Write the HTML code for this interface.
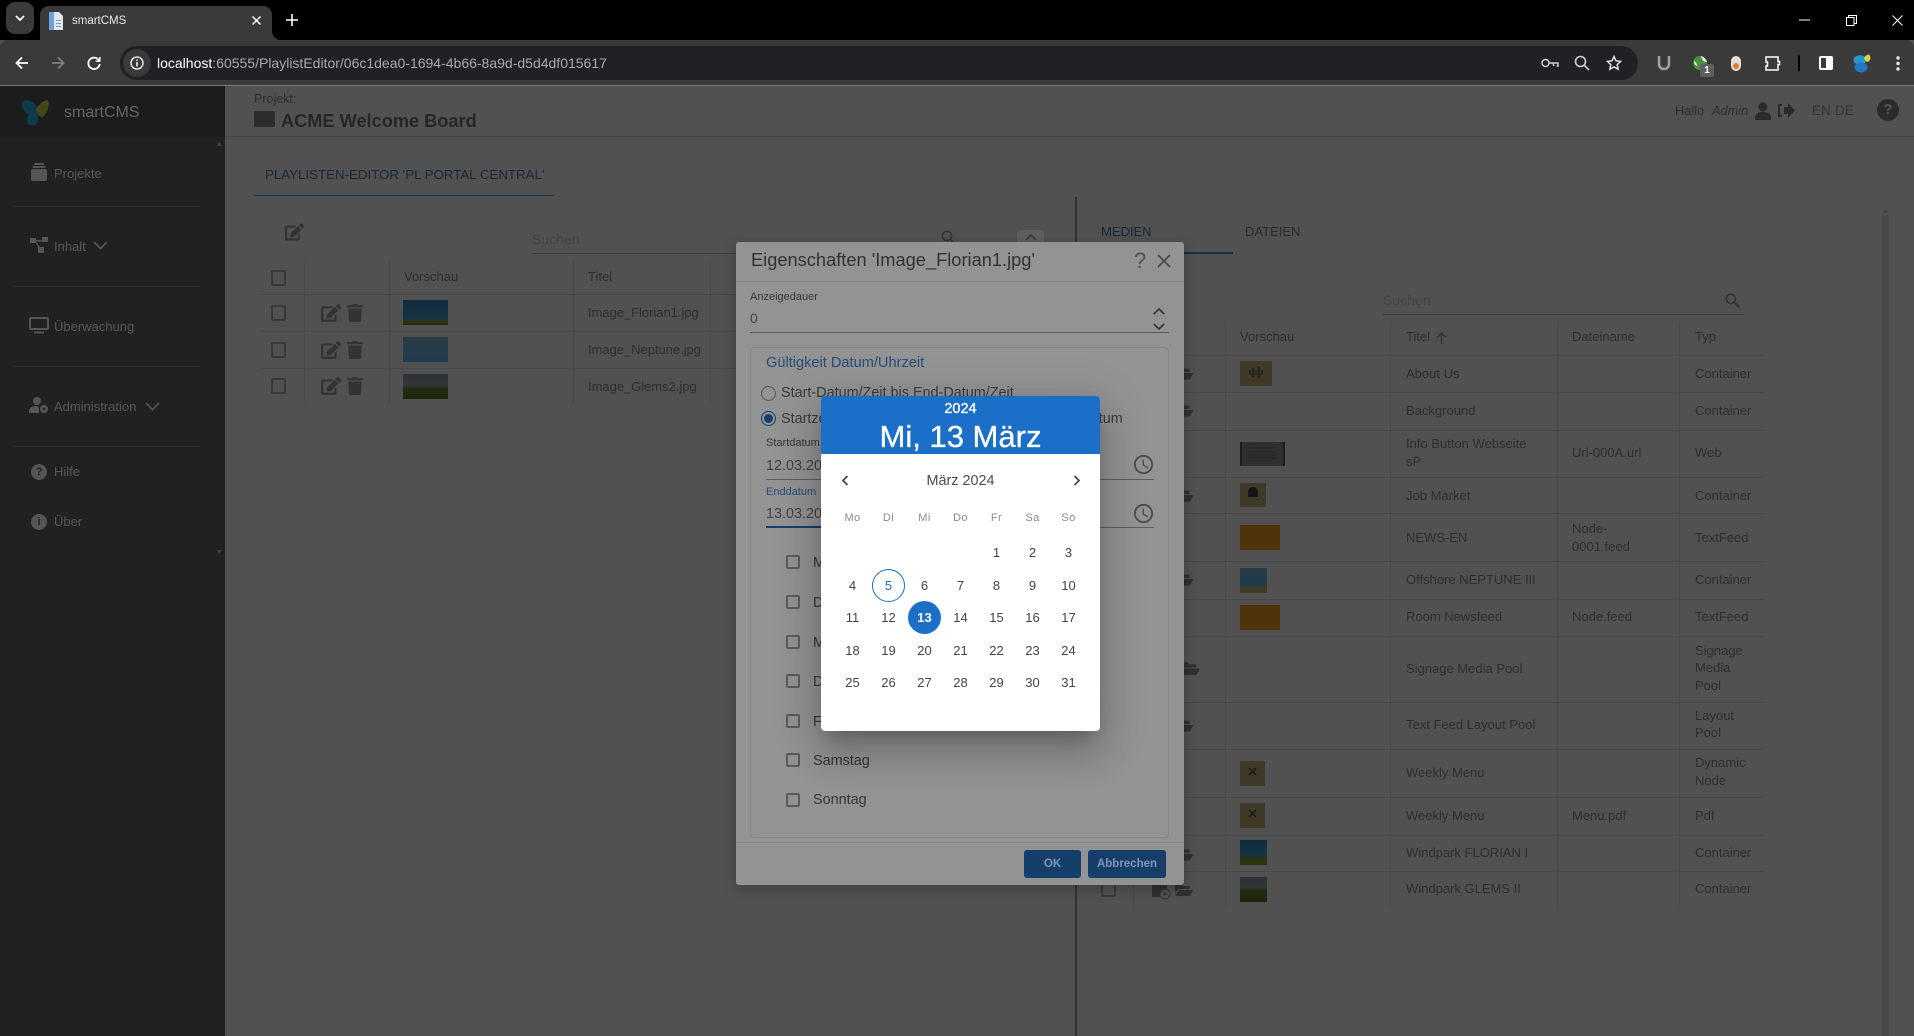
<!DOCTYPE html>
<html lang="de"><head><meta charset="utf-8"><title>smartCMS</title>
<style>
html,body{margin:0;padding:0;width:1914px;height:1036px;overflow:hidden;background:#515151}
body{position:relative;font-family:"Liberation Sans",sans-serif;font-size:13px;color:#2e2e2e}
div,span,svg{box-sizing:border-box}
.a{position:absolute}
.t{position:absolute;white-space:nowrap;line-height:18px;margin-top:-8px}
.h{position:absolute;height:1px;background:#484848}
.v{position:absolute;width:1px;background:#4a4a4a}
.s{color:#585858;font-size:13px}
.c{position:absolute;width:15px;height:16px;border:2px solid #393939;border-radius:2px}
.dc{position:absolute;left:786px;width:14px;height:14px;border:2px solid #5c5c5c;border-radius:2px;margin-top:-7px}
.dl{position:absolute;left:813px;font-size:14.4px;line-height:18px;margin-top:-8px;color:#363636;white-space:nowrap}
.d{position:absolute;width:33px;height:33px;margin:-16.5px 0 0 -16px;line-height:33px;text-align:center;font-size:13px;color:#444;border-radius:50%}
.w{position:absolute;width:33px;line-height:14px;margin:-6px 0 0 -16px;text-align:center;font-size:11px;letter-spacing:.4px;color:#8a8a8a}
.f{position:absolute;left:1184px;width:9px;height:18px;overflow:hidden;margin-top:-9px}
.f svg{position:absolute;left:-11px;top:0;width:20px;height:18px}
svg.i{position:absolute;overflow:visible}
</style></head><body>
<svg width="0" height="0" style="position:absolute"><defs>
<symbol id="edit" viewBox="0 0 576 512"><path d="M402.6 83.2l90.2 90.2c3.8 3.8 3.8 10 0 13.8L274.4 405.6l-92.8 10.3c-12.4 1.4-22.9-9.1-21.5-21.5l10.3-92.8L388.8 83.2c3.8-3.8 10-3.8 13.8 0zm162-22.9l-48.8-48.8c-15.2-15.2-39.9-15.2-55.2 0l-35.4 35.4c-3.8 3.8-3.8 10 0 13.8l90.2 90.2c3.8 3.8 10 3.8 13.8 0l35.4-35.4c15.2-15.3 15.2-40 0-55.2zM384 346.2V448H64V128h229.8c3.2 0 6.2-1.3 8.5-3.5l40-40c7.6-7.6 2.2-20.5-8.5-20.5H48C21.5 64 0 85.5 0 112v352c0 26.5 21.5 48 48 48h352c26.5 0 48-21.5 48-48V306.2c0-10.7-12.9-16-20.5-8.5l-40 40c-2.2 2.3-3.5 5.3-3.5 8.5z"/></symbol>
<symbol id="trash" viewBox="0 0 448 512"><path d="M432 32H312l-9.4-18.7A24 24 0 0 0 281.1 0H166.8a23.72 23.72 0 0 0-21.4 13.3L136 32H16A16 16 0 0 0 0 48v32a16 16 0 0 0 16 16h416a16 16 0 0 0 16-16V48a16 16 0 0 0-16-16zM53.2 467a48 48 0 0 0 47.9 45h245.8a48 48 0 0 0 47.9-45L416 128H32z"/></symbol>
<symbol id="folder" viewBox="0 0 576 512"><path d="M572.694 292.093L500.27 416.248A63.997 63.997 0 0 1 444.989 448H45.025c-18.523 0-30.064-20.093-20.731-36.093l72.424-124.155A64 64 0 0 1 152 256h399.964c18.523 0 30.064 20.093 20.73 36.093zM152 224h328v-48c0-26.51-21.49-48-48-48H272l-64-64H48C21.49 64 0 85.49 0 112v278.046l69.077-118.418C86.214 242.25 117.989 224 152 224z"/></symbol>
<symbol id="search" viewBox="0 0 24 24"><path d="M15.5 14h-.79l-.28-.27C15.41 12.59 16 11.11 16 9.5 16 5.91 13.09 3 9.5 3S3 5.91 3 9.5 5.91 16 9.5 16c1.61 0 3.09-.59 4.23-1.57l.27.28v.79l5 4.99L20.49 19l-4.99-5zm-6 0C7.01 14 5 11.99 5 9.5S7.01 5 9.5 5 14 7.01 14 9.5 11.99 14 9.5 14z"/></symbol>
<symbol id="clock" viewBox="0 0 24 24"><path d="M11.99 2C6.47 2 2 6.48 2 12s4.47 10 9.99 10C17.52 22 22 17.52 22 12S17.52 2 11.99 2zM12 20c-4.42 0-8-3.58-8-8s3.58-8 8-8 8 3.58 8 8-3.58 8-8 8zm.5-13H11v6l5.25 3.15.75-1.23-4.5-2.67z"/></symbol>
</defs></svg>

<!-- browser chrome -->
<div class="a" style="left:0;top:0;width:1914px;height:40px;background:#000"></div>
<div class="a" style="left:6px;top:2px;width:28px;height:32px;background:#3a3a3a;border-radius:9px"></div>
<svg class="i" style="left:15px;top:15px" width="10" height="7" fill="none" stroke="#fff" stroke-width="1.8"><path d="M1 1l4 4 4-4"/></svg>
<div class="a" style="left:40px;top:6px;width:232px;height:36px;background:#3a3a3a;border-radius:9px 9px 0 0"></div>
<svg class="i" style="left:48px;top:12px" width="16" height="18"><path d="M1 0h10l4 4v14H1z" fill="#dfe8f2"/><path d="M1 0h5v18H1z" fill="#6fa3d8"/><path d="M8 8h5v1H8zM8 11h5v1H8zM8 14h5v1H8z" fill="#999"/></svg>
<div class="t" style="left:72px;top:20px;font-size:11.5px;color:#e8e8e8">smartCMS</div>
<svg class="i" style="left:252px;top:16px" width="9" height="9" stroke="#fff" stroke-width="1.5"><path d="M.5.5l8 8M8.500.5l-8 8"/></svg>
<svg class="i" style="left:286px;top:14px" width="12" height="12" stroke="#fff" stroke-width="1.6"><path d="M6 0v12M0 6h12"/></svg>
<svg class="i" style="left:1799px;top:19px" width="12" height="2"><path d="M0 1h11" stroke="#fff" stroke-width="1"/></svg>
<svg class="i" style="left:1846px;top:15px" width="11" height="11" fill="none" stroke="#fff" stroke-width="1"><path d="M.5 2.500h7.500v8H.5zM2.500 2.500V.5h8v8H8"/></svg>
<svg class="i" style="left:1892px;top:15px" width="11" height="11" stroke="#fff" stroke-width="1"><path d="M.5.5l10 10M10.500.5l-10 10"/></svg>

<div class="a" style="left:0;top:40px;width:1914px;height:46px;background:#3a3a3a;border-bottom:1px solid #7a7a7a;border-radius:8px 8px 0 0"></div>
<div class="a" style="left:272px;top:30px;width:10px;height:10px;background:#3a3a3a"></div>
<div class="a" style="left:272px;top:30px;width:10px;height:10px;background:#000;border-radius:0 0 0 9px"></div>
<svg class="i" style="left:15px;top:56px" width="14" height="14" fill="none" stroke="#fff" stroke-width="1.8"><path d="M13 7H2M7 1.500L1.500 7 7 12.500"/></svg>
<svg class="i" style="left:51px;top:56px" width="14" height="14" fill="none" stroke="#7e7e7e" stroke-width="1.8"><path d="M1 7h11M7 1.500L12.500 7 7 12.500"/></svg>
<svg class="i" style="left:87px;top:56px" width="14" height="14" fill="none" stroke="#fff" stroke-width="1.8"><path d="M12 4.500A5.700 5.700 0 1 0 12.700 8"/><path d="M12.800 1v4.200H8.600" stroke-width="1.4"/></svg>
<div class="a" style="left:120px;top:46px;width:1518px;height:34px;background:#202124;border-radius:17px"></div>
<div class="a" style="left:123px;top:49px;width:28px;height:28px;background:#3a3a3a;border-radius:50%"></div>
<svg class="i" style="left:130px;top:56px" width="14" height="14" fill="none" stroke="#fff" stroke-width="1.300"><circle cx="7" cy="7" r="6"/><path d="M7 6v4.500M7 3.500v1.400" stroke-width="1.500"/></svg>
<div class="t" style="left:157px;top:62px;font-size:14px;color:#a6a9ad"><span style="color:#fff">localhost</span>:60555/PlaylistEditor/06c1dea0-1694-4b66-8a9d-d5d4df015617</div>
<svg class="i" style="left:1541px;top:57px" width="18" height="12" fill="none" stroke="#d0d0d0" stroke-width="1.500"><circle cx="4.500" cy="6" r="3.500"/><path d="M8 6h9v3h-1.500M12.500 6v3"/></svg>
<svg class="i" style="left:1574px;top:55px" width="16" height="16" fill="none" stroke="#d0d0d0" stroke-width="1.600"><circle cx="6.500" cy="6.500" r="5"/><path d="M10 10l5 5"/></svg>
<svg class="i" style="left:1606px;top:55px" width="16" height="16" fill="none" stroke="#e0e0e0" stroke-width="1.500"><path d="M8 1.500l2 4.300 4.600.6-3.400 3.200.9 4.600L8 11.900l-4.100 2.300.9-4.600-3.400-3.200 4.600-.6z"/></svg>
<svg class="i" style="left:1657px;top:56px" width="14" height="15" fill="none" stroke="#9aa3ab" stroke-width="2.600"><path d="M2 0v8a5 5 0 0 0 10 0V0"/></svg>
<div class="a" style="left:1693px;top:56px;width:14px;height:14px;border-radius:50%;background:#4d8f3f"></div>
<svg class="i" style="left:1693px;top:56px" width="14" height="14" fill="#e8f2e4"><path d="M8 0c3 1 5 3 6 6-2 0-4-1-5-3zM1 5c2 1 3 3 3 5-2-1-3-3-3-5z"/></svg>
<div class="a" style="left:1700px;top:64px;width:14px;height:13px;border-radius:2px;background:#5e5e5e;color:#fff;font-size:10px;font-weight:bold;line-height:13px;text-align:center">1</div>
<div class="a" style="left:1731px;top:56px;width:10px;height:15px;border-radius:5px;background:#e7dfd5"></div>
<div class="a" style="left:1733px;top:63px;width:6px;height:6px;border-radius:50%;background:#e57a2f"></div>
<svg class="i" style="left:1765px;top:56px" width="16" height="15" fill="none" stroke="#fff" stroke-width="1.500"><path d="M1 1h12v4.500h1.500v3H13V14H1v-4h1.500V6H1z"/></svg>
<div class="a" style="left:1798px;top:55px;width:2px;height:16px;background:#000"></div>
<div class="a" style="left:1819px;top:56px;width:14px;height:14px;border-radius:2px;background:#fff"></div>
<div class="a" style="left:1821px;top:58px;width:5px;height:10px;background:#3a3a3a"></div>
<svg class="i" style="left:1853px;top:54px" width="19" height="19"><ellipse cx="7" cy="6" rx="6.500" ry="4.800" fill="#2a95d6"/><ellipse cx="8" cy="13.500" rx="6.500" ry="5" fill="#2277c4"/><path d="M11 4c1-2 3-3.500 5-3.500 2 2 2 5.500-1 7.500-2-.5-3.500-2-4-4z" fill="#d8d23c"/></svg>
<svg class="i" style="left:1896px;top:56px" width="4" height="15" fill="#e8e8e8"><circle cx="2" cy="2" r="1.700"/><circle cx="2" cy="7.500" r="1.700"/><circle cx="2" cy="13" r="1.700"/></svg>

<!-- page header -->
<div class="h" style="left:225px;top:136px;width:1689px;background:#464646"></div>
<div class="t" style="left:254px;top:98px;font-size:12.500px;color:#2e2e2e">Projekt:</div>
<div class="a" style="left:254px;top:111px;width:21px;height:16px;background:#2c2c2c;border-radius:2px"></div>
<div class="t" style="left:281px;top:120px;font-size:18.200px;font-weight:bold;color:#262626">ACME Welcome Board</div>
<div class="t" style="left:1675px;top:110px;font-size:12.800px">Hallo</div>
<div class="t" style="left:1712px;top:110px;font-size:12.800px;font-style:italic">Admin</div>
<svg class="i" style="left:1755px;top:102px" width="16" height="18" fill="#2a2a2a"><circle cx="8" cy="5" r="4.500"/><path d="M0 18v-2c0-4 3-6 8-6s8 2 8 6v2z"/></svg>
<svg class="i" style="left:1777px;top:103px" width="18" height="15" fill="#2a2a2a"><path d="M7 4h4V0l7 7.500-7 7.500v-4H7z"/><path d="M5 2H2v11h3" fill="none" stroke="#2a2a2a" stroke-width="2"/></svg>
<div class="t" style="left:1812px;top:110px;font-size:13.500px;color:#333">EN</div>
<div class="t" style="left:1835px;top:110px;font-size:13.500px;color:#333">DE</div>
<div class="a" style="left:1877px;top:99px;width:22px;height:22px;border-radius:50%;background:#2b2b2b;color:#565656;font-size:15px;font-weight:bold;line-height:22px;text-align:center">?</div>

<!-- sidebar -->
<div class="a" style="left:0;top:86px;width:225px;height:950px;background:#212121"></div>
<div class="a" style="left:0;top:86px;width:225px;height:51px;background:#1c1c1c"></div>
<svg class="i" style="left:21px;top:98px" width="29" height="29"><path d="M1 4c3-3 9-2 12 1 3 3 3 6 3 9 1 4 2 8 0 11-2 3-7 3-9 1-2-3-1-6 1-9C3 14 0 9 1 4z" fill="#0e3a4e"/><path d="M15 12c1-4 6-9 12-10 2 5 0 12-5 17-3 1-6-3-7-7z" fill="#474716"/></svg>
<div class="t" style="left:64px;top:112px;font-size:16px;color:#666">smartCMS</div>
<svg class="i" style="left:217px;top:142px" width="5" height="4" fill="#444"><path d="M2.500 0L5 4H0z"/></svg>
<svg class="i" style="left:217px;top:550px" width="5" height="4" fill="#444"><path d="M2.500 4L5 0H0z"/></svg>
<svg class="i" style="left:31px;top:163px" width="16" height="18" fill="#555"><rect x="3" y="0" width="10" height="2" rx="1"/><rect x="1.500" y="3" width="13" height="2" rx="1"/><rect x="0" y="6" width="16" height="12" rx="2"/></svg>
<div class="t s" style="left:54px;top:173px">Projekte</div>
<div class="h" style="left:13px;top:206px;width:187px;background:#2c2c2c"></div>
<svg class="i" style="left:30px;top:237px" width="18" height="16" fill="#555"><rect x="0" y="1" width="6" height="5"/><rect x="12" y="0" width="6" height="5"/><rect x="8" y="10" width="6" height="6"/><path d="M5 3h8v1.500H5zM5 5l4 6 1-1-4-5z"/></svg>
<div class="t s" style="left:54px;top:246px">Inhalt</div>
<svg class="i" style="left:93px;top:241px" width="15" height="9" fill="none" stroke="#555" stroke-width="1.700"><path d="M1 1l6.500 6.500L14 1"/></svg>
<div class="h" style="left:13px;top:286px;width:187px;background:#2c2c2c"></div>
<svg class="i" style="left:29px;top:317px" width="20" height="17" fill="none" stroke="#555"><rect x="1" y="1" width="18" height="11" stroke-width="2" rx="1"/><path d="M5 15.500h10" stroke-width="2"/></svg>
<div class="t s" style="left:54px;top:326px">Überwachung</div>
<div class="h" style="left:13px;top:366px;width:187px;background:#2c2c2c"></div>
<svg class="i" style="left:29px;top:397px" width="20" height="16" fill="#555"><circle cx="8" cy="4" r="4"/><path d="M0 16v-2c0-3 3-5 7-5 2 0 3 1 3 3v4z"/><circle cx="15" cy="12" r="4"/><circle cx="15" cy="12" r="1.300" fill="#212121"/></svg>
<div class="t s" style="left:54px;top:406px">Administration</div>
<svg class="i" style="left:145px;top:402px" width="15" height="9" fill="none" stroke="#555" stroke-width="1.700"><path d="M1 1l6.500 6.500L14 1"/></svg>
<div class="h" style="left:13px;top:446px;width:187px;background:#2c2c2c"></div>
<div class="a" style="left:31px;top:464px;width:16px;height:16px;border-radius:50%;background:#555;color:#212121;font-size:11px;font-weight:bold;line-height:16px;text-align:center">?</div>
<div class="t s" style="left:54px;top:471px">Hilfe</div>
<div class="a" style="left:31px;top:514px;width:16px;height:16px;border-radius:50%;background:#555;color:#212121;font-size:11px;font-weight:bold;line-height:16px;text-align:center">i</div>
<div class="t s" style="left:54px;top:521px">Über</div>

<!-- left panel -->
<div class="t" style="left:265px;top:174px;font-size:13.300px;color:#192838">PLAYLISTEN-EDITOR 'PL PORTAL CENTRAL'</div>
<div class="a" style="left:254px;top:195px;width:300px;height:1px;background:#15304c"></div>
<svg class="i" style="left:285px;top:223px;fill:#333" width="19" height="18"><use href="#edit"/></svg>
<div class="t" style="left:532px;top:238px;font-size:14px;color:#444">Suchen</div>
<div class="a" style="left:532px;top:253px;width:440px;height:1px;background:#3c3c3c"></div>
<svg class="i" style="left:939px;top:228px;fill:#333" width="20" height="20"><use href="#search"/></svg>
<div class="a" style="left:1017px;top:230px;width:27px;height:22px;background:#5e5e5e;border-radius:4px"></div>
<svg class="i" style="left:1025px;top:234px" width="12" height="7" fill="none" stroke="#333" stroke-width="1.500"><path d="M1 6l5-5 5 5"/></svg>
<div class="v" style="left:304px;top:260px;height:145px"></div><div class="v" style="left:389px;top:260px;height:145px"></div><div class="v" style="left:573px;top:260px;height:145px"></div><div class="v" style="left:710px;top:260px;height:145px"></div>
<div class="h" style="left:261px;top:294px;width:500px"></div><div class="h" style="left:261px;top:331px;width:500px"></div><div class="h" style="left:261px;top:368px;width:500px"></div>
<div class="c" style="left:271px;top:270px"></div><div class="c" style="left:271px;top:305px"></div><div class="c" style="left:271px;top:342px"></div><div class="c" style="left:271px;top:378px"></div>
<div class="t" style="left:404px;top:276px">Vorschau</div><div class="t" style="left:588px;top:276px">Titel</div>
<svg class="i" style="left:321px;top:304px;fill:#333" width="20" height="18"><use href="#edit"/></svg><svg class="i" style="left:347px;top:304px;fill:#333" width="16" height="18"><use href="#trash"/></svg>
<svg class="i" style="left:321px;top:341px;fill:#333" width="20" height="18"><use href="#edit"/></svg><svg class="i" style="left:347px;top:341px;fill:#333" width="16" height="18"><use href="#trash"/></svg>
<svg class="i" style="left:321px;top:377px;fill:#333" width="20" height="18"><use href="#edit"/></svg><svg class="i" style="left:347px;top:377px;fill:#333" width="16" height="18"><use href="#trash"/></svg>
<div class="a" style="left:403px;top:300px;width:45px;height:25px;background:linear-gradient(#112b3c 0%,#163442 75%,#2d3411 82%,#262b0e 100%)"></div>
<div class="a" style="left:403px;top:337px;width:45px;height:25px;background:linear-gradient(#2a3a46 0%,#263d4b 55%,#1d3c4e 100%)"></div>
<div class="a" style="left:403px;top:374px;width:45px;height:25px;background:linear-gradient(#2f3338 0%,#32363a 45%,#222a0e 62%,#1e250c 100%)"></div>
<div class="t" style="left:588px;top:312px;font-size:12.950px">Image_Florian1.jpg</div><div class="t" style="left:588px;top:349px;font-size:12.950px">Image_Neptune.jpg</div><div class="t" style="left:588px;top:386px;font-size:12.950px">Image_Glems2.jpg</div>

<!-- right panel -->
<div class="a" style="left:1075px;top:197px;width:2px;height:839px;background:#333"></div>
<div class="t" style="left:1101px;top:231px;font-size:13px;color:#16273b">MEDIEN</div>
<div class="t" style="left:1245px;top:231px;font-size:13px;color:#2b2b2b">DATEIEN</div>
<div class="a" style="left:1085px;top:252px;width:148px;height:2px;background:#15304c"></div>
<div class="t" style="left:1383px;top:299px;font-size:14px;color:#444">Suchen</div>
<div class="a" style="left:1383px;top:314px;width:361px;height:1px;background:#3c3c3c"></div>
<svg class="i" style="left:1723px;top:291px;fill:#333" width="20" height="20"><use href="#search"/></svg>
<div class="v" style="left:1133px;top:322px;height:585px"></div><div class="v" style="left:1225px;top:322px;height:585px"></div><div class="v" style="left:1390px;top:322px;height:585px"></div><div class="v" style="left:1557px;top:322px;height:585px"></div><div class="v" style="left:1679px;top:322px;height:585px"></div>
<div class="h" style="left:1090px;top:355px;width:675px"></div><div class="h" style="left:1090px;top:392px;width:675px"></div><div class="h" style="left:1090px;top:430px;width:675px"></div><div class="h" style="left:1090px;top:477px;width:675px"></div><div class="h" style="left:1090px;top:513px;width:675px"></div><div class="h" style="left:1090px;top:561px;width:675px"></div><div class="h" style="left:1090px;top:599px;width:675px"></div><div class="h" style="left:1090px;top:636px;width:675px"></div><div class="h" style="left:1090px;top:702px;width:675px"></div><div class="h" style="left:1090px;top:749px;width:675px"></div><div class="h" style="left:1090px;top:797px;width:675px"></div><div class="h" style="left:1090px;top:835px;width:675px"></div><div class="h" style="left:1090px;top:871px;width:675px"></div>
<div class="t" style="left:1240px;top:336px">Vorschau</div><div class="t" style="left:1406px;top:336px">Titel</div>
<svg class="i" style="left:1436px;top:332px" width="11" height="12" fill="none" stroke="#333" stroke-width="1.400"><path d="M5.500 12V1M1 5.500L5.500 1 10 5.500"/></svg>
<div class="t" style="left:1572px;top:336px">Dateiname</div><div class="t" style="left:1695px;top:336px">Typ</div>

<div class="a" style="left:1240px;top:361px;width:32px;height:25px;background:#3e3a27"></div>
<svg class="i" style="left:1249px;top:367px" width="15" height="11" stroke="#151515" stroke-width="1.200"><path d="M1 3v5M4 1v9M7 3v5M10 0v11M13 3v5"/></svg>
<div class="a" style="left:1240px;top:442px;width:45px;height:24px;background:#2f2f2f;border-left:2px solid #1c1c1c;border-right:2px solid #1c1c1c"></div>
<svg class="i" style="left:1246px;top:447px" width="33" height="14" stroke="#262626" stroke-width="1"><path d="M4 1h25M2 5h29M2 8h29M2 11h29"/></svg>
<div class="a" style="left:1240px;top:483px;width:26px;height:24px;background:#3e3a27"></div>
<svg class="i" style="left:1247px;top:487px" width="12" height="10" fill="#151515"><path d="M6 0a5 5 0 0 1 5 5v5H1V5a5 5 0 0 1 5-5z"/></svg>
<div class="a" style="left:1240px;top:525px;width:40px;height:25px;background:#4e3408"></div>
<div class="a" style="left:1240px;top:605px;width:40px;height:25px;background:#4e3408"></div>
<div class="a" style="left:1240px;top:568px;width:27px;height:25px;background:linear-gradient(#2a3a46,#1d3c4e 65%,#3e3a27 80%)"></div>
<div class="a" style="left:1240px;top:761px;width:25px;height:25px;background:#3e3a27"></div>
<div class="a" style="left:1240px;top:803px;width:25px;height:25px;background:#3e3a27"></div>
<svg class="i" style="left:1248px;top:767px" width="9" height="9" stroke="#151515" stroke-width="1.300"><path d="M1 1l7 7M8 1L1 8"/></svg>
<svg class="i" style="left:1248px;top:809px" width="9" height="9" stroke="#151515" stroke-width="1.300"><path d="M1 1l7 7M8 1L1 8"/></svg>
<div class="a" style="left:1240px;top:840px;width:27px;height:25px;background:linear-gradient(#112b3c,#163442 60%,#2d3411 75%)"></div>
<div class="a" style="left:1240px;top:877px;width:27px;height:25px;background:linear-gradient(#2f3338,#32363a 40%,#222a0e 55%,#1e250c)"></div>

<div class="f" style="top:373px"><svg><use href="#folder" fill="#303030"/></svg></div>
<div class="f" style="top:410px"><svg><use href="#folder" fill="#303030"/></svg></div>
<div class="f" style="top:495px"><svg><use href="#folder" fill="#303030"/></svg></div>
<div class="f" style="top:579px"><svg><use href="#folder" fill="#303030"/></svg></div>
<div class="f" style="top:725px"><svg><use href="#folder" fill="#303030"/></svg></div>
<div class="f" style="top:854px"><svg><use href="#folder" fill="#303030"/></svg></div>
<svg class="i" style="left:1180px;top:660px;fill:#303030" width="20" height="17"><use href="#folder"/></svg>
<div class="c" style="left:1101px;top:881px"></div>
<svg class="i" style="left:1175px;top:882px;fill:#303030" width="18" height="16"><use href="#folder"/></svg>
<svg class="i" style="left:1152px;top:883px" width="18" height="16" fill="#303030"><path d="M0 0h6l2 2h7v12H0z"/><circle cx="13" cy="11" r="5" fill="#515151" stroke="#303030"/><path d="M13 8.500v5M10.500 11h5" stroke="#303030"/></svg>

<div class="t" style="left:1406px;top:373px">About Us</div><div class="t" style="left:1406px;top:410px">Background</div><div class="t" style="left:1406px;top:443px">Info Button Webseite</div><div class="t" style="left:1406px;top:461px">sP</div><div class="t" style="left:1406px;top:495px">Job Market</div><div class="t" style="left:1406px;top:537px">NEWS-EN</div><div class="t" style="left:1406px;top:579px">Offshore NEPTUNE III</div><div class="t" style="left:1406px;top:616px">Room Newsfeed</div><div class="t" style="left:1406px;top:668px">Signage Media Pool</div><div class="t" style="left:1406px;top:724px">Text Feed Layout Pool</div><div class="t" style="left:1406px;top:772px">Weekly Menu</div><div class="t" style="left:1406px;top:815px">Weekly Menu</div><div class="t" style="left:1406px;top:852px">Windpark FLORIAN I</div><div class="t" style="left:1406px;top:888px">Windpark GLEMS II</div>
<div class="t" style="left:1572px;top:452px">Url-000A.url</div><div class="t" style="left:1572px;top:528px">Node-</div><div class="t" style="left:1572px;top:546px">0001.feed</div><div class="t" style="left:1572px;top:616px">Node.feed</div><div class="t" style="left:1572px;top:815px">Menu.pdf</div>
<div class="t" style="left:1695px;top:373px">Container</div><div class="t" style="left:1695px;top:410px">Container</div><div class="t" style="left:1695px;top:452px">Web</div><div class="t" style="left:1695px;top:495px">Container</div><div class="t" style="left:1695px;top:537px">TextFeed</div><div class="t" style="left:1695px;top:579px">Container</div><div class="t" style="left:1695px;top:616px">TextFeed</div><div class="t" style="left:1695px;top:650px">Signage</div><div class="t" style="left:1695px;top:667px">Media</div><div class="t" style="left:1695px;top:685px">Pool</div><div class="t" style="left:1695px;top:715px">Layout</div><div class="t" style="left:1695px;top:732px">Pool</div><div class="t" style="left:1695px;top:762px">Dynamic</div><div class="t" style="left:1695px;top:780px">Node</div><div class="t" style="left:1695px;top:815px">Pdf</div><div class="t" style="left:1695px;top:852px">Container</div><div class="t" style="left:1695px;top:888px">Container</div>
<div class="a" style="left:1882px;top:215px;width:7px;height:821px;background:#474747"></div>
<svg class="i" style="left:1883px;top:209px" width="5" height="4" fill="#444"><path d="M2.500 0L5 4H0z"/></svg>

<!-- dialog -->
<div class="a" style="left:736px;top:242px;width:448px;height:643px;background:#939393;border-radius:3px;box-shadow:0 3px 12px rgba(0,0,0,.25)"></div>
<div class="t" style="left:751px;top:260px;font-size:18.250px;line-height:22px;margin-top:-11px;color:#323232">Eigenschaften 'Image_Florian1.jpg'</div>
<div class="t" style="left:1134px;top:261px;font-size:22px;line-height:22px;margin-top:-11px;color:#525252">?</div>
<svg class="i" style="left:1157px;top:254px" width="14" height="14" stroke="#464646" stroke-width="1.600"><path d="M1 1l12 12M13 1L1 13"/></svg>
<div class="h" style="left:736px;top:281px;width:448px;background:#868686"></div>
<div class="t" style="left:750px;top:296px;font-size:11px;color:#363636">Anzeigedauer</div>
<div class="t" style="left:750px;top:317px;font-size:14px;color:#444">0</div>
<svg class="i" style="left:1153px;top:308px" width="12" height="7" fill="none" stroke="#333" stroke-width="1.700"><path d="M.8 6L6 1l5.200 5"/></svg>
<svg class="i" style="left:1153px;top:323px" width="12" height="7" fill="none" stroke="#333" stroke-width="1.700"><path d="M.8 1L6 6l5.200-5"/></svg>
<div class="h" style="left:750px;top:332px;width:419px;background:#5e5e5e"></div>
<div class="a" style="left:750px;top:347px;width:419px;height:491px;border:1px solid #868686;border-radius:4px"></div>
<div class="t" style="left:766px;top:362px;font-size:14.600px;color:#264d78">Gültigkeit Datum/Uhrzeit</div>
<div class="a" style="left:760.500px;top:385.500px;width:15px;height:15px;border:1.500px solid #555;border-radius:50%"></div>
<div class="t" style="left:781px;top:392px;font-size:14.400px;color:#3a3a3a">Start-Datum/Zeit bis End-Datum/Zeit</div>
<div class="a" style="left:760.500px;top:410.500px;width:15px;height:15px;border:1.500px solid #163f6b;border-radius:50%"></div>
<div class="a" style="left:763.500px;top:413.500px;width:9px;height:9px;background:#163f6b;border-radius:50%"></div>
<div class="t" style="left:781px;top:418px;font-size:14.400px;color:#3a3a3a">Startzeit</div>
<div class="t" style="left:1050px;width:72px;text-align:right;top:418px;font-size:14.400px;color:#3a3a3a">End-Datum</div>
<div class="t" style="left:766px;top:442px;font-size:11px;color:#363636">Startdatum</div>
<div class="t" style="left:766px;top:465px;font-size:14.400px;color:#444">12.03.2024</div>
<div class="h" style="left:766px;top:479px;width:388px;background:#5e5e5e"></div>
<svg class="i" style="left:1132px;top:453px;fill:#4e4e4e" width="23" height="23"><use href="#clock"/></svg>
<div class="t" style="left:766px;top:491px;font-size:11px;color:#264d78">Enddatum</div>
<div class="t" style="left:766px;top:513px;font-size:14.400px;color:#444">13.03.2024</div>
<div class="h" style="left:766px;top:527px;width:388px;background:#5e5e5e"></div>
<div class="h" style="left:766px;top:526px;width:60px;height:2px;background:#163f6b"></div>
<svg class="i" style="left:1132px;top:502px;fill:#4e4e4e" width="23" height="23"><use href="#clock"/></svg>
<div class="dc" style="top:562px"></div><div class="dl" style="top:562px">Montag</div>
<div class="dc" style="top:602px"></div><div class="dl" style="top:602px">Dienstag</div>
<div class="dc" style="top:642px"></div><div class="dl" style="top:642px">Mittwoch</div>
<div class="dc" style="top:681px"></div><div class="dl" style="top:681px">Donnerstag</div>
<div class="dc" style="top:721px"></div><div class="dl" style="top:721px">Freitag</div>
<div class="dc" style="top:760px"></div><div class="dl" style="top:760px">Samstag</div>
<div class="dc" style="top:800px"></div><div class="dl" style="top:799px">Sonntag</div>
<div class="h" style="left:736px;top:842px;width:448px;background:#868686"></div>
<div class="a" style="left:1024px;top:850px;width:57px;height:28px;background:#153e6a;border-radius:3px;color:#7f97b3;font-size:11.500px;font-weight:bold;line-height:28px;text-align:center">OK</div>
<div class="a" style="left:1088px;top:850px;width:78px;height:28px;background:#153e6a;border-radius:3px;color:#7f97b3;font-size:11.500px;font-weight:bold;line-height:28px;text-align:center">Abbrechen</div>

<!-- calendar -->
<div class="a" style="left:821px;top:396px;width:279px;height:335px;background:#fff;border-radius:4px;box-shadow:0 11px 15px -7px rgba(0,0,0,.2),0 24px 38px 3px rgba(0,0,0,.14),0 9px 46px 8px rgba(0,0,0,.12);overflow:hidden">
<div style="height:58px;background:#1c6fc7"></div></div>
<div class="t" style="left:821px;width:279px;text-align:center;top:408px;font-size:14.500px;color:#fff;-webkit-text-stroke:.3px #fff">2024</div>
<div class="t" style="left:821px;width:279px;text-align:center;top:437px;line-height:36px;margin-top:-18px;font-size:31px;color:#fff;-webkit-text-stroke:.3px #fff">Mi, 13 März</div>
<div class="t" style="left:821px;width:279px;text-align:center;top:480px;font-size:14.400px;color:#4c4c4c">März 2024</div>
<svg class="i" style="left:841px;top:475px" width="8" height="11" fill="none" stroke="#444" stroke-width="1.700"><path d="M6.500 1L2 5.500 6.500 10"/></svg>
<svg class="i" style="left:1073px;top:475px" width="8" height="11" fill="none" stroke="#444" stroke-width="1.700"><path d="M1.500 1L6 5.500 1.500 10"/></svg>
<div class="w" style="left:852px;top:517px">Mo</div><div class="w" style="left:888px;top:517px">Di</div><div class="w" style="left:924px;top:517px">Mi</div><div class="w" style="left:960px;top:517px">Do</div><div class="w" style="left:996px;top:517px">Fr</div><div class="w" style="left:1032px;top:517px">Sa</div><div class="w" style="left:1068px;top:517px">So</div>
<div class="d" style="left:996px;top:552px">1</div><div class="d" style="left:1032px;top:552px">2</div><div class="d" style="left:1068px;top:552px">3</div>
<div class="d" style="left:852px;top:585px">4</div><div class="d" style="left:888px;top:585px;border:1px solid #1c6fc7;color:#1c6fc7;line-height:31px">5</div><div class="d" style="left:924px;top:585px">6</div><div class="d" style="left:960px;top:585px">7</div><div class="d" style="left:996px;top:585px">8</div><div class="d" style="left:1032px;top:585px">9</div><div class="d" style="left:1068px;top:585px">10</div>
<div class="d" style="left:852px;top:617px">11</div><div class="d" style="left:888px;top:617px">12</div><div class="d" style="left:924px;top:617px;background:#1c6fc7;color:#fff;font-weight:bold">13</div><div class="d" style="left:960px;top:617px">14</div><div class="d" style="left:996px;top:617px">15</div><div class="d" style="left:1032px;top:617px">16</div><div class="d" style="left:1068px;top:617px">17</div>
<div class="d" style="left:852px;top:650px">18</div><div class="d" style="left:888px;top:650px">19</div><div class="d" style="left:924px;top:650px">20</div><div class="d" style="left:960px;top:650px">21</div><div class="d" style="left:996px;top:650px">22</div><div class="d" style="left:1032px;top:650px">23</div><div class="d" style="left:1068px;top:650px">24</div>
<div class="d" style="left:852px;top:682px">25</div><div class="d" style="left:888px;top:682px">26</div><div class="d" style="left:924px;top:682px">27</div><div class="d" style="left:960px;top:682px">28</div><div class="d" style="left:996px;top:682px">29</div><div class="d" style="left:1032px;top:682px">30</div><div class="d" style="left:1068px;top:682px">31</div>
</body></html>
